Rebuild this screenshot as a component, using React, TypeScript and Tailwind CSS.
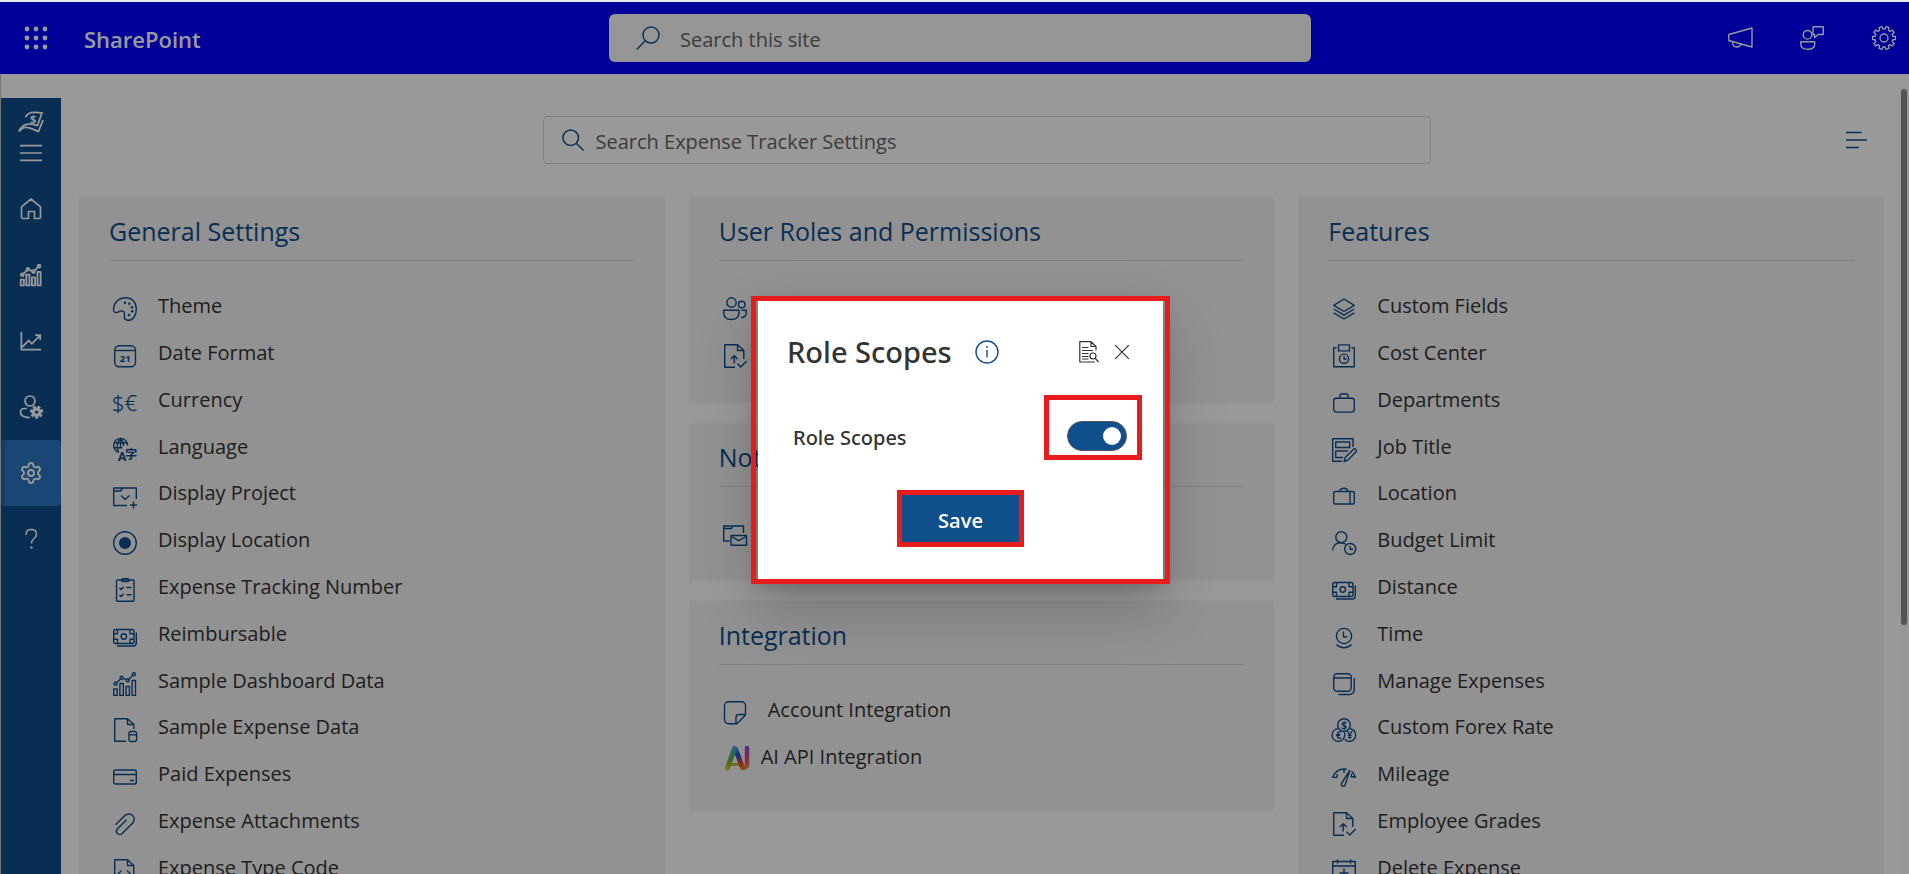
import { useState, type ReactNode } from "react";
import { Settings } from "lucide-react";

function Icon({ children, className = "size-6" }: { children: ReactNode; className?: string }) {
  return (
    <svg
      viewBox="0 0 24 24"
      className={`${className} shrink-0 overflow-visible`}
      fill="none"
      stroke="currentColor"
      strokeWidth="1.4"
      strokeLinejoin="round"
      aria-hidden="true"
    >
      {children}
    </svg>
  );
}

function cogPath(teeth: number, outer: number, inner: number) {
  const step = (Math.PI * 2) / teeth;
  const points: string[] = [];
  for (let i = 0; i < teeth; i++) {
    const a = i * step + step / 2;
    [
      [-0.32, inner],
      [-0.22, outer],
      [0.22, outer],
      [0.32, inner],
    ].forEach(([k, r]) => {
      const t = a + k * step;
      points.push(`${(12 + r * Math.sin(t)).toFixed(2)} ${(12 - r * Math.cos(t)).toFixed(2)}`);
    });
  }
  return `M${points.join("L")}Z`;
}

const docOutline = "M20.8 11V6.5L14.5 .7H1.7V23.3H13";
const docFold = "M14.5 .7V6.5H20.8";

const icons: Record<string, ReactNode> = {
  palette: (
    <Icon>
      <path d="M.8 14.2C-.6 6.8 5 .7 13 .7c6.3 0 10.3 4.8 10.3 11.6 0 6.500-3.500 11-8 11-3.100 0-4.400-2-3.900-4.700.5-3-.6-5.200-3.400-4.600-2.600.6-5.800 3.400-7.200.2z" />
      <g fill="currentColor" stroke="none">
        <circle cx="12" cy="5.700" r="1.200" />
        <circle cx="16.300" cy="6.800" r="1.200" />
        <circle cx="19" cy="10.300" r="1.200" />
        <circle cx="19.200" cy="14.300" r="1.200" />
        <circle cx="16" cy="18" r="1.200" />
      </g>
    </Icon>
  ),
  calendar: (
    <Icon>
      <rect x="1.700" y="1.700" width="20.800" height="21" rx="4.500" />
      <path d="M2 6.500H22.500" />
      <text x="12.200" y="18" textAnchor="middle" fontSize="9.500" fontWeight="700" fill="currentColor" stroke="none">
        21
      </text>
    </Icon>
  ),
  currency: (
    <Icon>
      <text x="-1" y="20" fontSize="22" fontWeight="300" fill="currentColor" stroke="currentColor" strokeWidth=".3" className="font-['Open_Sans']">
        $€
      </text>
    </Icon>
  ),
  language: (
    <Icon>
      <path d="M6 14.200A7 7 0 1 1 14.600 7.500M.8 4.800H13.500M.8 9.800H9.500M5.500 14C3.500 9 4 4 7.500.5M7.500.5C9.500 2.500 10.500 5 10.500 8M7.500.5V10" />
      <text x="4.800" y="22.600" fontSize="13" fontWeight="700" fill="currentColor" stroke="none" className="font-['Roboto']">
        A
      </text>
      <text x="12.200" y="20.800" fontSize="12" fontWeight="700" fill="currentColor" stroke="none" className="font-['Noto_Sans_CJK_JP']">
        字
      </text>
    </Icon>
  ),
  folderCheck: (
    <Icon>
      <path d="M14 21.500H.7V4H23.300V15M.7 7H7.500L9.500 4M8 11.500L12 15.500L16.500 11.500M20.500 17.500V24.500M17 21H24" />
    </Icon>
  ),
  target: (
    <Icon>
      <circle cx="12" cy="12" r="11.300" />
      <circle cx="12" cy="12" r="6" fill="currentColor" stroke="none" />
    </Icon>
  ),
  clipboard: (
    <Icon>
      <rect x="3.500" y="2" width="17.500" height="21.300" rx="1" />
      <rect x="8.500" y=".7" width="7.500" height="2.800" rx="1.200" />
      <path d="M6.500 10l1.500 1.500 2.800-2.800M13.500 9.500h5M6.500 17l1.500 1.500 2.800-2.800M13.500 16.800h5" />
    </Icon>
  ),
  banknotes: (
    <Icon>
      <rect x=".7" y="4.500" width="20.300" height="14" rx="1.800" />
      <circle cx="10.800" cy="11.500" r="2.700" />
      <path d="M.7 8.800H4.500V4.500M21 8.800H17V4.500M.7 14.300H4.500V18.500M21 14.300H17V18.500M23.300 7.500V18a3 3 0 0 1-3 3H4" />
    </Icon>
  ),
  chart: (
    <Icon>
      <rect x=".8" y="17" width="3.400" height="6.400" />
      <rect x="6.900" y="11.500" width="3.400" height="11.900" />
      <rect x="13" y="14.500" width="3.400" height="8.900" />
      <rect x="19.100" y="8.500" width="3.400" height="14.900" />
      <circle cx="2.500" cy="11.800" r="1.500" />
      <circle cx="8.600" cy="5.800" r="1.500" />
      <circle cx="14.700" cy="8.300" r="1.500" />
      <circle cx="20.800" cy="2.300" r="1.500" />
      <path d="M3.600 10.700l3.900-3.800M10 6.400l3.300 1.300M15.800 7.300l4-4" />
    </Icon>
  ),
  docData: (
    <Icon>
      <path d={docOutline} />
      <path d={docFold} />
      <rect x="16" y="13.500" width="7.600" height="10" rx="2" />
      <path d="M16 16.800h7.600" />
    </Icon>
  ),
  card: (
    <Icon>
      <rect x=".7" y="5" width="22.600" height="14" rx="2" />
      <path d="M.7 9.500H23.300M17 15.500h4" />
    </Icon>
  ),
  clip: (
    <Icon>
      <path d="M2.500 12.800L11.600 3.800c2.300-2.300 6-2.500 8.100-.4s1.900 5.600-.2 7.800L9.200 21.400c-1.300 1.300-3.500 1.400-4.800.1s-1.100-3.400.1-4.700L13.600 7.800" />
    </Icon>
  ),
  docCode: (
    <Icon>
      <path d="M14.500.7H1.700V23.300H20.800V6.500L14.500.7V6.500H20.800M8.500 11.500l-3.500 3.500 3.500 3.500M14 11.500l3.500 3.500-3.500 3.500" />
    </Icon>
  ),
  people: (
    <Icon>
      <circle cx="8.500" cy="5.500" r="4.700" />
      <path d="M.7 13.200H16V15.500C16 20 13 22.500 8.300 22.500S.7 20 .7 15.500z" />
      <circle cx="18.700" cy="7.500" r="3.300" />
      <path d="M18.500 13.200h4.800v2c0 3.300-2 5.300-5.300 5.300" />
    </Icon>
  ),
  docApprove: (
    <Icon>
      <path d="M20.800 15V6.500L14.500 .7H1.700V23.300H12" />
      <path d={docFold} />
      <path d="M11.200 19.500V12M7.800 15l3.400-3.300L14.600 15M14.500 19.700l3.200 3.200 6-6" />
    </Icon>
  ),
  folderMail: (
    <Icon>
      <path d="M6.500 18H.7V3H20.500V10M.7 5.500H8.500L10 3" />
      <rect x="8" y="12.500" width="15.500" height="9.800" />
      <path d="M8.500 13.500l7.300 4.200 7.300-4.200" />
    </Icon>
  ),
  note: (
    <Icon>
      <path d="M5.500.7H18.500a4 4 0 0 1 4 4V14L14 22.700H5.500a4 4 0 0 1-4-4V4.700a4 4 0 0 1 4-4zM22.500 13.500H16a3 3 0 0 0-3 3V22.700" />
    </Icon>
  ),
  layers: (
    <Icon>
      <path d="M12 2L22.300 8.300 12 14.500 1.700 8.300zM1.700 12L12 18.200 22.300 12M1.700 15.800L12 22 22.300 15.800" />
    </Icon>
  ),
  costCenter: (
    <Icon>
      <path d="M4.500 3.700H1.700V22.700H22.300V3.700H19.500" />
      <rect x="6.500" y=".9" width="11" height="6" />
      <circle cx="12" cy="14.700" r="4.600" />
      <path d="M12 12.300V15h2.500" />
    </Icon>
  ),
  briefcase: (
    <Icon>
      <rect x="1.700" y="7.300" width="20.600" height="13.800" rx="2.500" />
      <path d="M8 7.300V4.500a1.500 1.500 0 0 1 1.500-1.500h5A1.500 1.500 0 0 1 16 4.500V7.300" />
    </Icon>
  ),
  form: (
    <Icon>
      <path d="M10 23.300H.7V.7H21V9" />
      <rect x="3.700" y="4" width="14" height="5.500" />
      <path d="M16 13H3.700V19.500H11M12 23.500l1.200-4L21.300 11.500a1.800 1.800 0 0 1 2.600 2.600L16 22z" />
    </Icon>
  ),
  suitcase: (
    <Icon>
      <rect x="1.700" y="7.500" width="20.600" height="12.500" rx="1.500" />
      <path d="M18 7.500V20M7.500 7.500C8 5 9.500 4.300 12 4.300S15.500 5 16 7.500" />
    </Icon>
  ),
  personClock: (
    <Icon>
      <circle cx="9.300" cy="6.200" r="5.500" />
      <path d="M.7 19.500C.7 14.500 4 11.700 8.500 11.700c2 0 3.500.5 5 1.500" />
      <circle cx="18.200" cy="18" r="5.500" />
      <path d="M18.200 14.700V18.300h3" />
    </Icon>
  ),
  clock: (
    <Icon>
      <circle cx="12" cy="11" r="7.600" />
      <path d="M11.500 6.500V12H15.300M4.500 19.500C8.500 23.800 15.500 23.800 19.500 19.500" />
    </Icon>
  ),
  stack: (
    <Icon>
      <rect x="1.700" y="1.700" width="17.500" height="17.500" rx="3.500" />
      <path d="M1.700 6H19.200M22.300 6V17.500a5 5 0 0 1-5 5H6.500" />
    </Icon>
  ),
  forex: (
    <Icon>
      <circle cx="12" cy="7" r="6.300" />
      <path d="M5.800 10.800A6.300 6.300 0 1 0 12.500 18.500 6.300 6.300 0 0 0 12 13.500M18.200 10.800a6.300 6.300 0 1 1-5.400 10.500" />
      <g fill="currentColor" stroke="none" fontSize="10" fontWeight="700" textAnchor="middle">
        <text x="12" y="10.600">$</text>
        <text x="6.500" y="20.800">€</text>
        <text x="17.600" y="20.800">¥</text>
      </g>
    </Icon>
  ),
  gauge: (
    <Icon>
      <path d="M4.800 12.500L.7 12.200C3 6.500 7 4 12 4c1 0 2 .1 2.800.3M4.800 12.500L5.500 9M12 4V8M19.500 6.200c1.800 1.300 3.200 3.300 4 6L19 11.500l1-3M17.800 5.500L9.500 18.500c-.6 1.500.3 2.800 1.500 2.800s2-.6 2.300-1.800z" />
    </Icon>
  ),
  calendarPlus: (
    <Icon>
      <rect x=".7" y="2.500" width="22.600" height="20.800" />
      <path d="M.7 7H23.300M5.500.5V4.500M18.500.5V4.500M12 9.500V18.500M7.500 14H16.500" />
    </Icon>
  ),
};

type Item = { label: string; icon: string };

const general: Item[] = [
  { label: "Theme", icon: "palette" },
  { label: "Date Format", icon: "calendar" },
  { label: "Currency", icon: "currency" },
  { label: "Language", icon: "language" },
  { label: "Display Project", icon: "folderCheck" },
  { label: "Display Location", icon: "target" },
  { label: "Expense Tracking Number", icon: "clipboard" },
  { label: "Reimbursable", icon: "banknotes" },
  { label: "Sample Dashboard Data", icon: "chart" },
  { label: "Sample Expense Data", icon: "docData" },
  { label: "Paid Expenses", icon: "card" },
  { label: "Expense Attachments", icon: "clip" },
  { label: "Expense Type Code", icon: "docCode" },
];

const features: Item[] = [
  { label: "Custom Fields", icon: "layers" },
  { label: "Cost Center", icon: "costCenter" },
  { label: "Departments", icon: "briefcase" },
  { label: "Job Title", icon: "form" },
  { label: "Location", icon: "suitcase" },
  { label: "Budget Limit", icon: "personClock" },
  { label: "Distance", icon: "banknotes" },
  { label: "Time", icon: "clock" },
  { label: "Manage Expenses", icon: "stack" },
  { label: "Custom Forex Rate", icon: "forex" },
  { label: "Mileage", icon: "gauge" },
  { label: "Employee Grades", icon: "docApprove" },
  { label: "Delete Expense", icon: "calendarPlus" },
];

function AiLogo() {
  return (
    <svg viewBox="0 0 28 28" className="size-7 shrink-0" fill="none" strokeWidth="5" strokeLinecap="round" aria-hidden="true">
      <defs>
        <linearGradient id="ai-left" gradientUnits="userSpaceOnUse" x1="12" y1="2" x2="4" y2="26">
          <stop offset="0" stopColor="#3fa4ee" />
          <stop offset=".55" stopColor="#5fae4a" />
          <stop offset="1" stopColor="#d6c322" />
        </linearGradient>
        <linearGradient id="ai-right" gradientUnits="userSpaceOnUse" x1="12" y1="3" x2="20" y2="26">
          <stop offset="0" stopColor="#3f8fe0" />
          <stop offset=".35" stopColor="#2b50d0" />
          <stop offset=".7" stopColor="#d2453c" />
          <stop offset="1" stopColor="#ef8b2c" />
        </linearGradient>
        <linearGradient id="ai-bar" gradientUnits="userSpaceOnUse" x1="24" y1="2" x2="24" y2="26">
          <stop offset="0" stopColor="#8a45e0" />
          <stop offset=".5" stopColor="#d4478c" />
          <stop offset="1" stopColor="#f0952f" />
        </linearGradient>
      </defs>
      <path d="M8 20.500H15" stroke="#c9b52a" strokeWidth="3" />
      <path d="M24 4V22L21 24" stroke="url(#ai-bar)" strokeWidth="4.500" strokeLinejoin="round" />
      <path d="M12.500 5L19.500 23.500" stroke="url(#ai-right)" />
      <path d="M11.500 4.500L4.500 24" stroke="url(#ai-left)" />
    </svg>
  );
}

function Card({ title, children, className = "" }: { title: string; children: ReactNode; className?: string }) {
  return (
    <section className={`bg-[#f4f4f4] px-[30px] pt-4 ${className}`}>
      <h2 className="border-b border-[#d4d4d4] pb-[11px] text-[25px] leading-9 text-[#0f4d8b]">{title}</h2>
      {children}
    </section>
  );
}

function ItemLink({ item }: { item: Item }) {
  return (
    <li className="flex">
      <a href="#" className="flex items-center gap-[21px] pl-1">
        <span className="pt-1 text-[#0f4d8b]">{icons[item.icon]}</span>
        <span className="pb-0.5">{item.label}</span>
      </a>
    </li>
  );
}

function IconLink({ item }: { item: Item }) {
  return (
    <li className="flex">
      <a href="#" aria-label={item.label} className="flex items-center pl-1">
        <span className="pt-1 text-[#0f4d8b]">{icons[item.icon]}</span>
      </a>
    </li>
  );
}

function LongList({ items }: { items: Item[] }) {
  return (
    <ul className="mt-[23px] grid h-[608px] auto-rows-fr">
      {items.map((item) => (
        <ItemLink key={item.label} item={item} />
      ))}
    </ul>
  );
}

function SideButton({ label, active = false, children }: { label: string; active?: boolean; children: ReactNode }) {
  return (
    <button
      type="button"
      aria-label={label}
      className={`flex h-[66px] w-full items-center justify-center rounded-sm ${active ? "border-l-4 border-[#1f69ad] bg-[#2b76be] pr-1" : ""}`}
    >
      {children}
    </button>
  );
}

function TopBar() {
  return (
    <header className="flex h-[72px] shrink-0 items-center bg-[#0000ff] pr-[13px] pl-6 text-white">
      <div className="flex flex-1 items-center gap-9">
        <button type="button" aria-label="App launcher">
          <Icon>
            {[3, 12, 21].map((y) =>
              [3, 12, 21].map((x) => <circle key={`${x}-${y}`} cx={x} cy={y} r="2.400" fill="currentColor" stroke="none" />)
            )}
          </Icon>
        </button>
        <a href="#" className="pt-0.5 text-[22px] font-semibold">
          SharePoint
        </a>
      </div>
      <label className="flex h-12 w-[702px] items-center gap-5 rounded-md bg-[#fafafa] pl-[27px] text-[#0f4d8b]">
        <Icon>
          <circle cx="15" cy="9" r="8" />
          <path d="M9.500 14.500L.7 23.500" />
        </Icon>
        <input
          type="search"
          aria-label="Search this site"
          placeholder="Search this site"
          className="w-full bg-transparent pt-1 text-xl text-[#333] outline-none placeholder:text-[#666]"
        />
      </label>
      <div className="flex flex-1 justify-end gap-12">
        <button type="button" aria-label="Announcements">
          <Icon>
            <path d="M.8 8.500L24 2V21L.8 14.500zM4.500 16c0 3.500 1.800 5 4.300 5s3.700-1.200 4.300-3" />
          </Icon>
        </button>
        <button type="button" aria-label="Feedback">
          <Icon>
            <circle cx="7.500" cy="8.800" r="4.300" />
            <path d="M.8 15.800H14.700V18c0 3.500-2.500 5.300-7 5.300S.8 21.500.8 18zM13 .8H23.300V8.500H18L14.500 11.500V8.500H13z" />
          </Icon>
        </button>
        <button type="button" aria-label="Site settings">
          <Icon>
            <path d={cogPath(10, 11.500, 9)} />
            <circle cx="12" cy="12" r="4" />
          </Icon>
        </button>
      </div>
    </header>
  );
}

function Sidebar() {
  return (
    <nav className="mt-6 flex w-[60px] shrink-0 flex-col items-center bg-[#0f4d8b] pt-3 text-white">
      <svg viewBox="0 0 26 24" className="h-6 w-[26px]" fill="none" stroke="currentColor" strokeWidth="1.800" aria-hidden="true">
        <path d="M7.500 7C10 2.500 14 1.500 24 2.800L19.500 15.500C14 14 6 11.500 1 21" />
        <path d="M1 21.500C7 13.500 13 19 20.500 21.500L25 10" />
        <text x="12" y="12.500" fontSize="11" fontWeight="700" fill="currentColor" stroke="none">
          $
        </text>
      </svg>
      <button type="button" aria-label="Toggle menu" className="mb-1 flex h-[38px] items-center">
        <Icon className="size-[22px]">
          <path d="M0 4H24M0 12H24M0 20H24" strokeWidth="1.800" />
        </Icon>
      </button>
      <SideButton label="Home">
        <Icon>
          <path d="M2.500 9.800L12 2l9.500 7.800V20a1.500 1.500 0 0 1-1.500 1.500H15.500V14.500h-6V21.500H4A1.500 1.500 0 0 1 2.500 20z" strokeWidth="1.700" />
        </Icon>
      </SideButton>
      <SideButton label="Dashboard">
        <span className="[&>svg]:size-[22px] [&>svg]:stroke-2">{icons.chart}</span>
      </SideButton>
      <SideButton label="Reports">
        <Icon className="size-[22px]">
          <path d="M1.500 2V21.500H23M1.500 19.500L9.500 11.500 13 15 22 5.500M16.500 5.500H22V11" strokeWidth="1.900" strokeLinejoin="miter" />
        </Icon>
      </SideButton>
      <SideButton label="Users">
        <Icon>
          <circle cx="11" cy="6" r="5" strokeWidth="1.700" />
          <path d="M8 13.500H5a3.500 3.500 0 0 0-3.500 3.500c0 4 4 5.800 9.500 5.500" strokeWidth="1.700" />
          <path d={cogPath(7, 11.500, 8)} transform="translate(11 10.500) scale(.55)" fill="currentColor" />
          <circle cx="17.600" cy="17.100" r="1.700" fill="#0f4d8b" stroke="none" />
        </Icon>
      </SideButton>
      <SideButton label="Settings" active>
        <Settings className="size-6" strokeWidth={1.9} />
      </SideButton>
      <SideButton label="Help">
        <Icon>
          <path d="M7 8V7.500C7 4.500 9 2.500 12.200 2.500S17.500 4.500 17.500 7.200C17.500 11.500 12.500 11 12.500 16.500" strokeWidth="1.500" />
          <circle cx="12.500" cy="20.500" r="1.200" fill="currentColor" stroke="none" />
        </Icon>
      </SideButton>
    </nav>
  );
}

function RoleScopesDialog() {
  const [enabled, setEnabled] = useState(true);
  return (
    <div
      role="dialog"
      aria-modal="true"
      aria-labelledby="role-scopes-title"
      className="relative flex h-[282px] w-[405px] flex-col bg-white pt-[35px] pr-[34px] pl-[29px] text-[#333] shadow-[0_26px_58px_rgba(0,0,0,0.22),0_5px_14px_rgba(0,0,0,0.18)]"
    >
      <div className="pointer-events-none absolute -inset-x-[7px] -inset-y-[3px] border-5 border-[#e81c1c]" />
      <div className="flex h-9 items-center">
        <h1 id="role-scopes-title" className="font-['Segoe_UI','Noto_Sans',sans-serif] text-[29px] leading-9 font-medium">
          Role Scopes
        </h1>
        <button type="button" aria-label="Information" className="ml-auto text-[#0f4f8b]">
          <Icon>
            <circle cx="12" cy="12" r="11" />
            <path d="M12 10V17.500" />
            <circle cx="12" cy="7" r="1" fill="currentColor" stroke="none" />
          </Icon>
        </button>
        <button type="button" aria-label="View log" className="ml-20">
          <svg viewBox="0 0 20 22" className="h-[22px] w-5" fill="none" stroke="currentColor" strokeWidth="1.200" aria-hidden="true">
            <path d="M17 9.500V5.500L12 .7H.8V21H16M12 .7V5.500H17M3 6.500H9.500M3 9.500H14M3 12.500H9.500M3 15.500H9.500M3 18H9.500" />
            <circle cx="14" cy="15" r="3" />
            <path d="M16 17.200L19.500 21" />
          </svg>
        </button>
        <button type="button" aria-label="Close" className="ml-4">
          <svg viewBox="0 0 14 14" className="size-3.5" stroke="currentColor" strokeWidth="1.200" aria-hidden="true">
            <path d="M0 0L14 14M14 0L0 14" />
          </svg>
        </button>
      </div>
      <div className="mt-[51px] flex h-[30px] items-center justify-between pr-0.5 pl-1.5">
        <label htmlFor="role-scopes" className="pt-1 font-['Segoe_UI','Noto_Sans',sans-serif] text-xl font-medium">
          Role Scopes
        </label>
        <div className="relative flex">
          <input
            id="role-scopes"
            type="checkbox"
            role="switch"
            checked={enabled}
            onChange={() => setEnabled(!enabled)}
            className="h-[30px] w-[60px] appearance-none rounded-full border border-[#555] bg-[#0f4f8b] before:mt-[5px] before:ml-[5px] before:block before:size-[18px] before:rounded-full before:bg-white checked:before:ml-[35px]"
          />
          <span className="pointer-events-none absolute -top-[26px] -right-[15px] -bottom-[9px] -left-[23px] border-5 border-[#e81c1c]" />
        </div>
      </div>
      <div className="relative mt-11 ml-[115px] flex w-[117px]">
        <button type="button" className="h-[47px] w-full bg-[#0f4f8b] pt-1 text-xl font-semibold text-white">
          Save
        </button>
        <span className="pointer-events-none absolute -inset-[5px] border-5 border-[#e81c1c]" />
      </div>
    </div>
  );
}

export default function App() {
  return (
    <div className="flex h-screen flex-col overflow-hidden bg-white font-['Segoe_UI','Open_Sans',sans-serif] text-[#333]">
      <div className="h-0.5 shrink-0 bg-[#e6eaf6]" />
      <div className="relative flex min-h-0 flex-1 flex-col">
        <TopBar />
        <div className="flex min-h-0 flex-1 border-l border-[#c4c4c4]">
          <Sidebar />
          <main className="min-w-0 flex-1 overflow-hidden pr-[17px] pl-[18px] text-xl">
            <div className="flex h-[123px] items-start pt-[42px] pl-2.5">
              <div className="flex-1" />
              <label className="flex h-12 w-[888px] items-center gap-3 rounded-sm border border-[#d4d4d4] pl-[18px] text-[#0f4d8b]">
                <Icon className="size-[22px]">
                  <circle cx="9.500" cy="9.500" r="8.500" strokeWidth="1.600" />
                  <path d="M15.500 15.500L23.500 23.500" strokeWidth="1.600" />
                </Icon>
                <input
                  type="search"
                  aria-label="Search Expense Tracker Settings"
                  placeholder="Search Expense Tracker Settings"
                  className="w-full bg-transparent pt-1 text-[#333] outline-none placeholder:text-[#666]"
                />
              </label>
              <div className="flex h-12 flex-1 items-center justify-end">
                <button type="button" aria-label="Filter" className="mr-4 text-[#0f4d8b]">
                  <Icon>
                    <path d="M2 4.500H17.500M2 12H23M2 19.500H15" strokeWidth="1.600" />
                  </Icon>
                </button>
              </div>
            </div>
            <div className="grid grid-cols-3 items-start gap-x-6">
              <Card title="General Settings" className="pb-8">
                <LongList items={general} />
              </Card>
              <div className="flex flex-col gap-5">
                <Card title="User Roles and Permissions" className="pb-[26px]">
                  <ul className="mt-[22px] grid auto-rows-[47px]">
                    <IconLink item={{ label: "User Permissions", icon: "people" }} />
                    <IconLink item={{ label: "Role Scopes", icon: "docApprove" }} />
                  </ul>
                </Card>
                <Card title="Notifications" className="pb-[25px]">
                  <ul className="mt-[22px] grid auto-rows-[47px]">
                    <IconLink item={{ label: "Mail Notifications", icon: "folderMail" }} />
                  </ul>
                </Card>
                <Card title="Integration" className="pb-[30px]">
                  <ul className="mt-[22px] grid auto-rows-[47px]">
                    <ItemLink item={{ label: "Account Integration", icon: "note" }} />
                    <li className="flex">
                      <a href="#" className="flex items-center gap-2.5 pl-1">
                        <AiLogo />
                        <span className="pb-0.5">AI API Integration</span>
                      </a>
                    </li>
                  </ul>
                </Card>
              </div>
              <Card title="Features" className="pb-8">
                <LongList items={features} />
              </Card>
            </div>
          </main>
          <div className="mt-[15px] mr-0.5 w-1.5 shrink-0 bg-[#f8f8f8]" aria-hidden="true">
            <div className="h-[536px] rounded-full bg-[#8c8c8c]" />
          </div>
        </div>
        <div className="absolute inset-0 flex items-center justify-center bg-black/40 pt-1 pl-3">
          <RoleScopesDialog />
        </div>
      </div>
    </div>
  );
}
